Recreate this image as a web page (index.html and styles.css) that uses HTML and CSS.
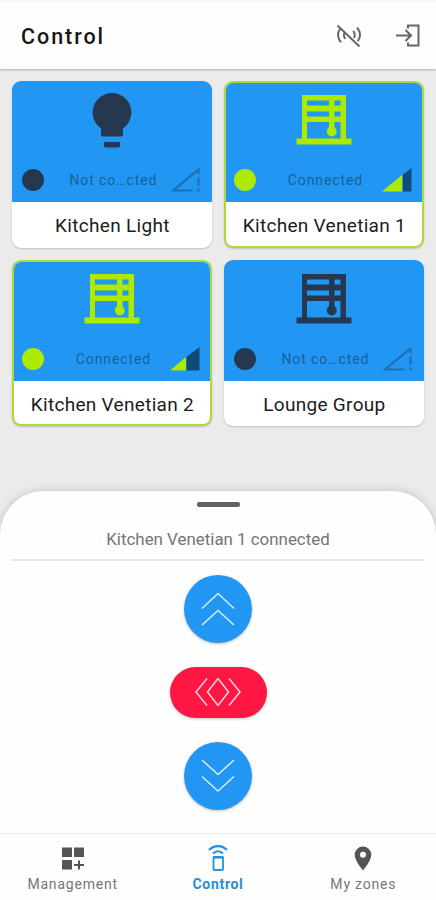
FILE: index.html
```html
<!DOCTYPE html>
<html lang="en">
  <head>
    <meta charset="UTF-8" />
    <meta name="viewport" content="width=device-width, initial-scale=1.0" />
    <title>Control</title>
    <link rel="stylesheet" href="styles.css">
  </head>
  <body>
    <svg class="sprite" aria-hidden="true">
      <symbol id="bulb" viewBox="0 0 56 56">
        <path d="M28 0a19.5 19.5 0 0 1 11 35.500V41.500a2 2 0 0 1-2 2H19a2 2 0 0 1-2-2V35.500A19.500 19.500 0 0 1 28 0zM20 49h16v3.500a2 2 0 0 1-2 2H22a2 2 0 0 1-2-2z" />
      </symbol>
      <symbol id="blind" viewBox="0 0 56 50">
        <path fill-rule="evenodd" d="M6 0H50V43.500H55.500V49.500H0.500V43.500H6zM11 5.500V10.500H33V5.500zM38.500 5.500V10.500H44.500V5.500zM11 16.500V21.500H33V16.500zM38.500 16.500V21.500H44.500V16.500zM11 27V43.500H44.500V27H38.500V32.300A5 5 0 1 1 33 32.300V27z" />
      </symbol>
      <symbol id="signal-on" viewBox="0 0 30 24">
        <path class="level" d="M0 23.500L20 7V23.500z" />
        <path class="rest" d="M21 6.500L29.500 0V23.500H21z" />
      </symbol>
      <symbol id="signal-mid" viewBox="0 0 30 24">
        <path class="level" d="M0 23.500L16 10V23.500z" />
        <path class="rest" d="M16.500 10L29.500 0V23.500H16.500z" />
      </symbol>
      <symbol id="signal-off" viewBox="0 0 30 24">
        <path d="M22.500 22.500H3L28.500 1.500V6M28.500 9.500V17.500M28.500 20.500V23.500" fill="none" stroke="currentColor" stroke-width="2.200" />
      </symbol>
    </svg>

    <header class="topbar">
      <h1>Control</h1>
      <svg class="top-icon" width="28" height="24" viewBox="0 0 28 24" fill="none">
        <path d="M2.500 1.500L24.500 22.500M5 5C2 9 2.500 14.500 6 18.200M9.500 9C8.500 11 8.800 13 10.300 14.800M18.200 6.800c1.700 2.300 1.900 4.800.8 7.200M22 3.500c3.500 4.200 3.700 9.500.8 13.800" />
      </svg>
      <svg class="top-icon" width="26" height="24" viewBox="0 0 26 24" fill="none">
        <path d="M1 11.500H15.500M10.500 6L16 11.500L10.500 17M13 4.500V1.500H23.500V21.500H13V18.500" />
      </svg>
    </header>

    <main class="devices">
      <div class="card">
        <div class="card-top">
          <svg class="device-icon bulb"><use href="#bulb" /></svg>
          <div class="status">
            <span class="dot"></span>
            <span class="state">Not co…cted</span>
            <svg class="signal off"><use href="#signal-off" /></svg>
          </div>
        </div>
        <div class="name">Kitchen Light</div>
      </div>

      <div class="card connected">
        <div class="card-top">
          <svg class="device-icon"><use href="#blind" /></svg>
          <div class="status">
            <span class="dot"></span>
            <span class="state">Connected</span>
            <svg class="signal"><use href="#signal-on" /></svg>
          </div>
        </div>
        <div class="name">Kitchen Venetian 1</div>
      </div>

      <div class="card connected">
        <div class="card-top">
          <svg class="device-icon"><use href="#blind" /></svg>
          <div class="status">
            <span class="dot"></span>
            <span class="state">Connected</span>
            <svg class="signal"><use href="#signal-mid" /></svg>
          </div>
        </div>
        <div class="name">Kitchen Venetian 2</div>
      </div>

      <div class="card">
        <div class="card-top">
          <svg class="device-icon"><use href="#blind" /></svg>
          <div class="status">
            <span class="dot"></span>
            <span class="state">Not co…cted</span>
            <svg class="signal off"><use href="#signal-off" /></svg>
          </div>
        </div>
        <div class="name">Lounge Group</div>
      </div>
    </main>

    <section class="sheet">
      <div class="handle"></div>
      <p class="message">Kitchen Venetian 1 connected</p>
      <div class="controls">
        <button class="round" aria-label="Up">
          <svg width="34" height="34" viewBox="0 0 34 34"><path d="M1 16.500L17 1.500L33 16.500M1 33L17 18.500L33 33" /></svg>
        </button>
        <button class="stop" aria-label="Stop">
          <svg width="48" height="28" viewBox="0 0 48 28"><path d="M13 .5L2 14L13 27.500M24 .5L13.500 14L24 27.500L34.500 14zM35 .5L46 14L35 27.500" /></svg>
        </button>
        <button class="round" aria-label="Down">
          <svg width="34" height="34" viewBox="0 0 34 34"><path d="M1 1L17 15.500L33 1M1 17.500L17 32L33 17.500" /></svg>
        </button>
      </div>
    </section>

    <nav class="tabs">
      <a class="tab">
        <svg width="24" height="28" viewBox="0 0 24 28" fill="currentColor">
          <path d="M1 3.500h10v9.500H1zM13 3.500h10v9.500H13zM1 16h10v9.500H1zM17 16.500h2v3.500h4v2h-4v3.500h-2V22h-4v-2h4z" />
        </svg>
        <span>Management</span>
      </a>
      <a class="tab active">
        <svg width="20" height="28" viewBox="0 0 20 28" fill="none" stroke="currentColor" stroke-width="2.200">
          <path d="M1 6C6 .8 14 .8 19 6M5 9.500C8 6.500 12 6.500 15 9.500" />
          <rect x="5.500" y="13" width="9.500" height="13" rx="1" stroke-width="1.800" />
          <path d="M5 13.500H15.500" />
        </svg>
        <span>Control</span>
      </a>
      <a class="tab">
        <svg width="18" height="28" viewBox="0 0 18 28" fill="currentColor">
          <path fill-rule="evenodd" d="M9 2.500a8.300 8.300 0 0 1 8.300 8.300C17.300 17 9 26.500 9 26.500S.7 17 .7 10.800A8.300 8.300 0 0 1 9 2.500zm0 5.300a3 3 0 1 0 0 6 3 3 0 0 0 0-6z" />
        </svg>
        <span>My zones</span>
      </a>
    </nav>
  </body>
</html>
```
FILE: styles.css
```css
* {
  box-sizing: border-box;
}

body {
  margin: 0;
  height: 900px;
  display: flex;
  flex-direction: column;
  background-color: #ebebeb;
  font-family: Roboto, "Liberation Sans", sans-serif;
  overflow: hidden;
}

.sprite {
  display: none;
}

.topbar {
  height: 69px;
  flex: none;
  display: flex;
  align-items: center;
  padding: 1px 15px 0 21px;
  background-color: #fefefe;
  border-top: 2px solid #f6f6f6;
  box-shadow: 0 1px 2px rgba(0, 0, 0, 0.25);
}

h1 {
  flex: 1;
  margin: 0;
  font-size: 21.5px;
  font-weight: 500;
  letter-spacing: 1.95px;
  color: #161616;
}

.top-icon {
  stroke: #666;
  stroke-width: 2;
}

.top-icon + .top-icon {
  margin-left: 32px;
}

.devices {
  height: 421.5px;
  flex: none;
  display: grid;
  grid-template-columns: 1fr 1fr;
  grid-auto-rows: 166.5px;
  gap: 12px;
  padding: 12px 11.6px 0 12.4px;
}

.card {
  display: flex;
  flex-direction: column;
  border-radius: 9px;
  background-color: #fff;
  overflow: hidden;
  color: #263850;
  box-shadow: 0 1px 2px rgba(0, 0, 0, 0.2);
}

.card-top {
  height: 121px;
  display: flex;
  flex-direction: column;
  align-items: center;
  justify-content: space-between;
  padding: 14px 10px 10px;
  background-color: #2196f3;
}

.connected {
  color: #aeea00;
  border: 2px solid #aadb38;
}

.connected .card-top {
  height: 119px;
  padding: 12px 8px 10px;
}

.device-icon {
  width: 56px;
  height: 50px;
  fill: currentColor;
}

.device-icon.bulb {
  height: 56px;
  margin-top: -2px;
}

.status {
  width: 100%;
  display: flex;
  align-items: center;
}

.dot {
  width: 22px;
  height: 22px;
  border-radius: 50%;
  background-color: currentColor;
}

.state {
  flex: 1;
  padding-left: 12px;
  text-align: center;
  font-size: 14px;
  letter-spacing: 0.9px;
  color: #1c5f98;
}

.signal {
  width: 30px;
  height: 24px;
  margin-right: 2px;
}

.level {
  fill: #aeea00;
}

.rest {
  fill: #104a78;
}

.off {
  color: #1b70b5;
}

.name {
  flex: 1;
  display: flex;
  align-items: center;
  justify-content: center;
  padding-top: 2px;
  font-size: 19px;
  letter-spacing: 0.3px;
  color: #1c1c1c;
}

.connected .name {
  padding-top: 4px;
}

.sheet {
  height: 342px;
  flex: none;
  display: flex;
  flex-direction: column;
  align-items: center;
  padding: 11.5px 11px 0;
  border-radius: 44px 44px 0 0;
  background-color: #fefefe;
  box-shadow: 0 0 10px rgba(0, 0, 0, 0.18);
}

.handle {
  width: 43px;
  height: 5px;
  border-radius: 2px;
  background-color: #626262;
}

.message {
  width: 100%;
  height: 54px;
  margin: 0;
  padding-top: 22px;
  border-bottom: 2px solid #e6e6e6;
  text-align: center;
  font-size: 16.9px;
  line-height: 20px;
  color: #757575;
}

.controls {
  display: flex;
  flex-direction: column;
  align-items: center;
  gap: 24px;
  padding-top: 13.5px;
}

.controls button {
  display: flex;
  align-items: center;
  justify-content: center;
  padding: 0;
  border: none;
  box-shadow: 0 1px 3px rgba(0, 0, 0, 0.25);
}

.controls path {
  fill: none;
  stroke: #d5efff;
  stroke-width: 1.5;
}

.controls .round {
  width: 68px;
  height: 68px;
  border-radius: 50%;
  background-color: #2196f3;
}

.controls .stop {
  width: 97px;
  height: 51px;
  border-radius: 26px;
  background-color: #ff1744;
}

.controls .stop path {
  stroke: #ffd3dc;
}

.tabs {
  flex: 1;
  display: grid;
  grid-template-columns: repeat(3, 1fr);
  border-top: 1px solid #ececec;
  background-color: #fefefe;
}

.tab {
  display: flex;
  flex-direction: column;
  align-items: center;
  padding-top: 10px;
  color: #555;
}

.tab span {
  margin-top: 4px;
  font-size: 14px;
  line-height: 17px;
  letter-spacing: 0.8px;
  color: #777;
}

.tab.active {
  color: #2490dc;
}

.tab.active span {
  font-weight: 700;
  letter-spacing: 0.7px;
  color: #2490dc;
}
```
